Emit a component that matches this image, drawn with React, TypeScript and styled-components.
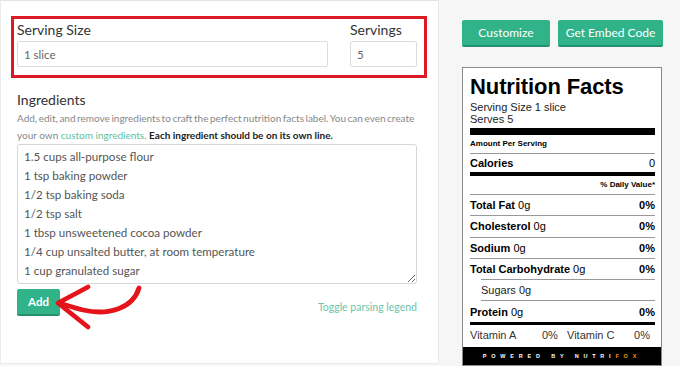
import styled, { createGlobalStyle } from "styled-components";

const GlobalStyle = createGlobalStyle`
  html, body {
    margin: 0;
    padding: 0;
    background: #f6f6f6;
  }
  body {
    font-family: Lato, "Open Sans", sans-serif;
    color: #333;
  }
`;

const Page = styled.div`
  display: flex;
  width: 680px;
  height: 366px;
  overflow: hidden;
`;

const EditorPanel = styled.div`
  position: relative;
  width: 440px;
  height: 364px;
  box-sizing: border-box;
  background: #fff;
  border: 1px solid #ebebeb;
  border-top-color: #e4e4e4;
  padding: 15px 21px 0 16px;
  display: flex;
  flex-direction: column;
`;

const HighlightBox = styled.div`
  display: flex;
  gap: 22px;
  border: 3px solid #dc1a24;
  margin: 0 -10px 0 -6px;
  padding: 3px 7px 8px 3px;
`;

const Field = styled.div<{ $grow?: boolean }>`
  display: flex;
  flex-direction: column;
  gap: 3px;
  min-width: 0;
  flex: ${(p) => (p.$grow ? "1 1 0" : "0 0 67px")};
`;

const Label = styled.label`
  font-size: 14px;
  line-height: 16px;
  color: #333;
`;

const Input = styled.input`
  width: 100%;
  height: 26px;
  box-sizing: border-box;
  border: 1px solid #dcdcdc;
  border-radius: 2px;
  padding: 0 6px;
  font-family: Lato, sans-serif;
  font-size: 11.5px;
  color: #666;
  outline: none;
`;

const Heading = styled.h3`
  margin: 13px 0 0;
  font-size: 14px;
  font-weight: 400;
  line-height: 18px;
  color: #333;
`;

const Help = styled.p`
  margin: 1px 0 0;
  font-size: 10px;
  line-height: 17px;
  color: #888;
  a {
    color: #5cbf9d;
    text-decoration: none;
  }
  strong {
    color: #222;
  }
`;

const Tight = styled.span`
  word-spacing: -1px;
`;

const IngredientBox = styled.textarea`
  margin-top: 0;
  height: 140px;
  box-sizing: border-box;
  border: 1px solid #d6d6d6;
  border-radius: 3px;
  padding: 2px 6px;
  font-family: Lato, sans-serif;
  font-size: 11.6px;
  line-height: 19px;
  color: #555;
  resize: vertical;
  outline: none;
`;

const ActionRow = styled.div`
  position: relative;
  display: flex;
  align-items: center;
  justify-content: space-between;
  margin-top: 5px;
`;

const Button = styled.button<{ $width?: number }>`
  height: 27px;
  width: ${(p) => (p.$width ? `${p.$width}px` : "auto")};
  box-sizing: border-box;
  border: none;
  border-bottom: 2px solid #25916f;
  border-radius: 2px;
  background: #31b38a;
  color: #fff;
  font-family: Lato, sans-serif;
  font-size: 12px;
  padding: 0;
`;

const AddButton = styled(Button)`
  font-weight: 700;
  font-size: 11.5px;
`;

const LegendLink = styled.a`
  font-size: 10.5px;
  color: #6cc5a6;
  margin-top: 8px;
`;

const Arrow = styled.svg`
  position: absolute;
  left: 32px;
  top: -8px;
  overflow: visible;
`;

const PreviewPanel = styled.div`
  flex: 1;
  padding: 20px 17px 0 23px;
  display: flex;
  flex-direction: column;
  gap: 20px;
`;

const ButtonRow = styled.div`
  display: flex;
  gap: 8px;
`;

const LabelCard = styled.div`
  width: 200px;
  box-sizing: border-box;
  background: #fff;
  border: 1px solid #8a8a8a;
  font-family: "Liberation Sans", Arial, sans-serif;
  color: #000;
`;

const LabelBody = styled.div`
  padding: 8px 6px 4px 7px;
`;

const Title = styled.div`
  font-size: 22px;
  font-weight: 900;
  line-height: 22px;
  letter-spacing: -0.1px;
`;

const Meta = styled.div`
  font-size: 11px;
  line-height: 11.5px;
  color: #222;
`;

const Bar = styled.div<{ $h: number; $mt?: number }>`
  height: ${(p) => p.$h}px;
  background: #000;
  margin-top: ${(p) => p.$mt ?? 0}px;
`;

const SmallBold = styled.div<{ $right?: boolean }>`
  font-size: 8px;
  font-weight: 700;
  line-height: 18px;
  text-align: ${(p) => (p.$right ? "right" : "left")};
  border-bottom: 1px solid #999;
`;

const Row = styled.div<{ $indent?: boolean; $last?: boolean; $h?: number }>`
  display: flex;
  justify-content: space-between;
  align-items: center;
  height: ${(p) => p.$h ?? 20.3}px;
  font-size: 11px;
  margin-left: ${(p) => (p.$indent ? "11px" : "0")};
  border-bottom: ${(p) => (p.$last ? "none" : "1px solid #999")};
  b {
    font-weight: 700;
  }
  span {
    font-weight: 400;
  }
`;

const SubText = styled.span`
  color: #222;
`;

const VitaminRow = styled.div`
  display: grid;
  grid-template-columns: 72px 14px 1fr auto;
  font-size: 11px;
  color: #333;
  line-height: 15px;
  padding: 3px 5px 0 0;
  span:nth-child(2),
  span:nth-child(4) {
    text-align: right;
  }
  span:nth-child(3) {
    padding-left: 11px;
  }
`;

const Footer = styled.div`
  background: #000;
  color: #fff;
  height: 18px;
  display: flex;
  align-items: center;
  justify-content: center;
  font-size: 5.5px;
  font-weight: 700;
  letter-spacing: 4.8px;
  em {
    font-style: normal;
    color: #f19a1d;
  }
`;

const ingredients = [
  "1.5 cups all-purpose flour",
  "1 tsp baking powder",
  "1/2 tsp baking soda",
  "1/2 tsp salt",
  "1 tbsp unsweetened cocoa powder",
  "1/4 cup unsalted butter, at room temperature",
  "1 cup granulated sugar",
].join("\n");

const nutrients = [
  { name: "Total Fat", amount: "0g", dv: "0%" },
  { name: "Cholesterol", amount: "0g", dv: "0%" },
  { name: "Sodium", amount: "0g", dv: "0%" },
  { name: "Total Carbohydrate", amount: "0g", dv: "0%" },
];

const App = () => {
  return (
    <Page>
      <GlobalStyle />
      <EditorPanel>
        <HighlightBox>
          <Field $grow>
            <Label>Serving Size</Label>
            <Input defaultValue="1 slice" />
          </Field>
          <Field>
            <Label>Servings</Label>
            <Input defaultValue="5" />
          </Field>
        </HighlightBox>

        <Heading>Ingredients</Heading>
        <Help>
          <Tight>
            Add, edit, and remove ingredients to craft the perfect nutrition facts label. You can even create
          </Tight>{" "}
          your own <a href="#">custom ingredients</a>. <strong>Each ingredient should be on its own line.</strong>
        </Help>
        <IngredientBox defaultValue={ingredients} spellCheck={false} />

        <ActionRow>
          <AddButton $width={43}>Add</AddButton>
          <LegendLink>Toggle parsing legend</LegendLink>
          <Arrow width="100" height="50" viewBox="0 0 100 50">
            <path
              d="M90 7 C 84 27, 60 35, 34 29 C 25 27, 17 24, 10 22"
              fill="none"
              stroke="#e5141b"
              strokeWidth="4.8"
              strokeLinecap="round"
            />
            <path
              d="M39 6 L 9 22 L 39 46"
              fill="none"
              stroke="#e5141b"
              strokeWidth="4.8"
              strokeLinecap="round"
              strokeLinejoin="round"
            />
          </Arrow>
        </ActionRow>
      </EditorPanel>

      <PreviewPanel>
        <ButtonRow>
          <Button $width={88}>Customize</Button>
          <Button $width={105}>Get Embed Code</Button>
        </ButtonRow>

        <LabelCard>
          <LabelBody>
            <Title>Nutrition Facts</Title>
            <Meta style={{ marginTop: 4 }}>Serving Size 1 slice</Meta>
            <Meta>Serves 5</Meta>
            <Bar $h={7} $mt={3} />
            <SmallBold>Amount Per Serving</SmallBold>
            <Row $last $h={18}>
              <b>Calories</b>
              <span>0</span>
            </Row>
            <Bar $h={4} />
            <SmallBold $right>% Daily Value*</SmallBold>
            {nutrients.map((n, i) => (
              <Row key={n.name} $last={i === 3}>
                <b>
                  {n.name} <span>{n.amount}</span>
                </b>
                <b>{n.dv}</b>
              </Row>
            ))}
            <Row $indent style={{ borderTop: "1px solid #999" }}>
              <SubText>Sugars 0g</SubText>
            </Row>
            <Row $last>
              <b>
                Protein <span>0g</span>
              </b>
              <b>0%</b>
            </Row>
            <Bar $h={3} />
            <VitaminRow>
              <span>Vitamin A</span>
              <span>0%</span>
              <span>Vitamin C</span>
              <span>0%</span>
            </VitaminRow>
          </LabelBody>
          <Footer>
            POWERED BY NUTRI<em>FOX</em>
          </Footer>
        </LabelCard>
      </PreviewPanel>
    </Page>
  );
};

export default App;
